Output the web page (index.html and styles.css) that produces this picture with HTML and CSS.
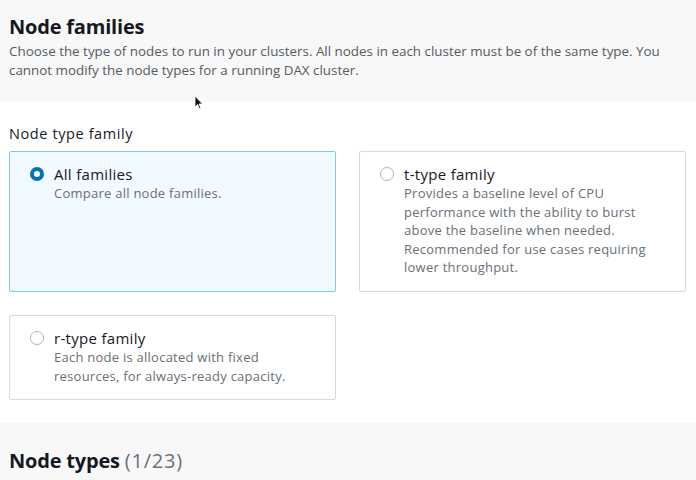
FILE: index.html
```html
<!DOCTYPE html>
<html>
<head>
<meta charset="utf-8">
<link rel="stylesheet" href="styles.css">
</head>
<body>
<section class="header">
  <h1 class="title">Node families</h1>
  <p class="desc">Choose the type of nodes to run in your clusters. All nodes in each cluster must be of the same type. You cannot modify the node types for a running DAX cluster.</p>
</section>
<section class="main">
  <div class="label">Node type family</div>
  <div class="cards">
    <div class="card selected">
      <span class="radio on"></span>
      <div class="card-body">
        <div class="card-title">All families</div>
        <div class="card-desc">Compare all node families.</div>
      </div>
    </div>
    <div class="card">
      <span class="radio"></span>
      <div class="card-body">
        <div class="card-title">t-type family</div>
        <div class="card-desc">Provides a baseline level of CPU performance with the ability to burst above the baseline when needed. Recommended for use cases requiring lower throughput.</div>
      </div>
    </div>
    <div class="card">
      <span class="radio"></span>
      <div class="card-body">
        <div class="card-title">r-type family</div>
        <div class="card-desc">Each node is allocated with fixed resources, for always-ready capacity.</div>
      </div>
    </div>
  </div>
</section>
<section class="footer">
  <h2 class="title">Node types <span class="count">(1/23)</span></h2>
</section>
<svg class="cursor" width="10" height="16" viewBox="0 0 10 16"><path d="M1 1 L1 12 L3.5 9.5 L5.5 14 L7 13.3 L5 9 L8.5 9 Z" fill="#111" stroke="#fff" stroke-width="0.8"/></svg>
</body>
</html>
```
FILE: styles.css
```css
* { box-sizing: border-box; }
html, body { margin: 0; padding: 0; }
body {
  width: 696px;
  height: 480px;
  overflow: hidden;
  font-family: "Open Sans", "Liberation Sans", sans-serif;
  color: #16191f;
  background: #fff;
  position: relative;
}
.header {
  background: #f8f8f8;
  height: 102px;
  padding: 14px 9px 0 9px;
}
.title {
  margin: 0;
  font-size: 20px;
  font-weight: 700;
  line-height: 26px;
  letter-spacing: -0.2px;
}
.desc {
  margin: 2px 0 0 0;
  font-size: 13.4px;
  line-height: 18.5px;
  color: #545b64;
}
.main {
  height: 321px;
  padding: 22px 10px 0 9px;
}
.label {
  font-size: 14.5px;
  line-height: 20px;
  letter-spacing: 0.6px;
  color: #16191f;
  margin-bottom: 7px;
}
.cards {
  display: grid;
  grid-template-columns: 327px 327px;
  column-gap: 23px;
  row-gap: 23px;
}
.card {
  border: 1px solid #d5dbdb;
  border-radius: 2px;
  display: flex;
  align-items: flex-start;
  gap: 10px;
  padding: 12px 20px 14px 20px;
  background: #fff;
}
.card.selected {
  border-color: #7ccde3;
  background: #f0faff;
  height: 141px;
}
.radio {
  flex: none;
  width: 14px;
  height: 14px;
  border-radius: 50%;
  border: 1.5px solid #aab7b8;
  background: #fff;
  margin-top: 3px;
}
.radio.on {
  border: 4px solid #0073bb;
}
.card-title {
  font-size: 15px;
  line-height: 20px;
  letter-spacing: 0.3px;
  color: #16191f;
}
.card-desc {
  font-size: 13px;
  line-height: 18.5px;
  letter-spacing: 0.25px;
  color: #687078;
  margin-top: 0;
}
.footer {
  background: #f8f8f8;
  height: 57px;
  padding: 25px 9px 0 9px;
}
.count {
  font-weight: 400;
  color: #687078;
  letter-spacing: 0.8px;
}
.cursor {
  position: absolute;
  left: 194px;
  top: 95px;
}
```
